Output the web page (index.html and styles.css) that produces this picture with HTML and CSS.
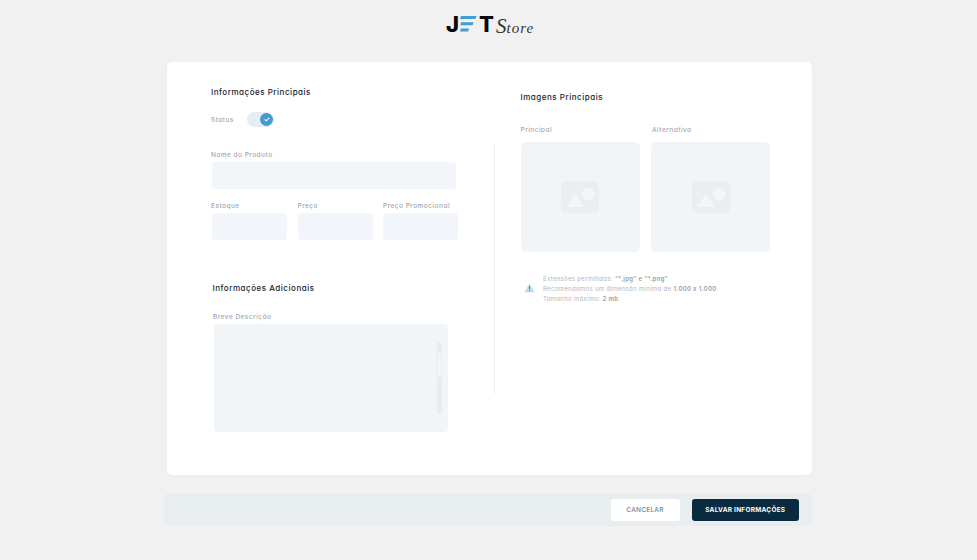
FILE: index.html
```html
<!DOCTYPE html>
<html lang="pt-BR">
<head>
<meta charset="utf-8">
<title>JET Store</title>
<link rel="stylesheet" href="styles.css">
</head>
<body>
<header class="brand">
  <span class="brand-j">J</span>
  <svg class="brand-e" width="17" height="17" viewBox="0 0 17 17" fill="#469dd0"><path d="M1 0H16.5L15.5 3H0ZM1 6.3H13.5L12.7 9.2H.4ZM1 12.6H9L8.2 15.6H0Z"/></svg>
  <span class="brand-t">T</span>
  <span class="brand-store"><span class="brand-s">S</span>tore</span>
</header>
<main class="card">
  <section class="details">
    <h2 class="title t-main">Informações Principais</h2>
    <div class="status"><span class="label">Status</span><span class="toggle"><span class="knob"><svg width="6" height="5" viewBox="0 0 6 5" fill="none" stroke="#fff" stroke-width="1.1"><path d="M.7 2.3L2.2 3.8L5.3.8"/></svg></span></span></div>
    <label class="label l-name">Nome do Produto</label>
    <div class="field name"></div>
    <div class="row">
      <div class="col"><label class="label">Estoque</label><div class="field"></div></div>
      <div class="col"><label class="label">Preço</label><div class="field"></div></div>
      <div class="col"><label class="label l-promo">Preço Promocional</label><div class="field"></div></div>
    </div>
    <h2 class="title t-extra">Informações Adicionais</h2>
    <label class="label l-desc">Breve Descrição</label>
    <div class="textarea"><div class="track"><div class="thumb"></div></div></div>
  </section>
  <div class="divider"></div>
  <section class="images">
    <h2 class="title t-img">Imagens Principais</h2>
    <div class="pictures">
      <div><div class="label l-pic">Principal</div>
        <div class="drop"><svg width="38" height="32" viewBox="0 0 38 32"><rect width="38" height="32" rx="5.5" fill="#e9eef1"/><path d="M5.5 26L14 12.5L22.5 26Z" fill="#f2f6f9"/><circle cx="27.3" cy="13" r="6.3" fill="#f2f6f9"/></svg></div></div>
      <div><div class="label l-pic l-alt">Alternativa</div>
        <div class="drop"><svg width="38" height="32" viewBox="0 0 38 32"><rect width="38" height="32" rx="5.5" fill="#e9eef1"/><path d="M5.5 26L14 12.5L22.5 26Z" fill="#f2f6f9"/><circle cx="27.3" cy="13" r="6.3" fill="#f2f6f9"/></svg></div></div>
    </div>
    <div class="note">
      <svg width="11" height="10" viewBox="0 0 11 10"><path d="M5.5.6L10.6 9.3H.4Z" fill="#b9deef"/><path d="M5.5 3V6.3M5.5 7.2V8.2" stroke="#4e8eaf" stroke-width="1.2"/></svg>
      <div class="lines">
        <div class="n1">Extensões permitidas: <b>“*.jpg” e “*.png”</b></div>
        <div class="n2">Recomendamos um dimensão mínima de <b>1.000 x 1.000</b></div>
        <div class="n3">Tamanho máximo: <b>2 mb</b>.</div>
      </div>
    </div>
  </section>
</main>
<footer class="actions">
  <button class="btn cancel">CANCELAR</button>
  <button class="btn save">SALVAR INFORMAÇÕES</button>
</footer>
</body>
</html>
```
FILE: styles.css
```css
* { box-sizing: border-box; }
body { margin: 0; height: 560px; background: #f1f1f1; overflow: hidden; font-family: Inter, "Liberation Sans", sans-serif; font-feature-settings: "cv11"; white-space: nowrap; }
.brand { height: 62px; padding: 16px 0 0 446px; display: flex; align-items: flex-start; }
.brand-j, .brand-t { font-weight: 800; font-size: 22px; line-height: 16px; color: #050708; }
.brand-j { width: 14px; }
.brand-t { width: 17px; margin-left: 2px; }
.brand-store { font: italic 15px/21px "Liberation Serif", serif; letter-spacing: 1px; color: #333; }
.brand-s { font-size: 21px; letter-spacing: 0; }
.card { margin-left: 167px; width: 645px; height: 413px; display: flex; background: #fff; border-radius: 5px; box-shadow: 0 1px 2px #e9ebec; }
.details { width: 327px; padding: 22.5px 0 0 44px; }
.title { margin: 0; font-size: 8px; line-height: 14px; font-weight: 500; color: #17232d; letter-spacing: .52px; }
.label { display: block; font-size: 6.5px; line-height: 10px; font-weight: 500; color: #a4a6ad; letter-spacing: .48px; }
.status { width: 63px; display: flex; align-items: center; height: 15px; margin-top: 13.5px; }
.toggle { width: 27px; height: 15px; margin-left: auto; border-radius: 8px; background: #e8edf4; padding: 1px; display: flex; justify-content: flex-end; }
.knob { width: 13px; height: 13px; border-radius: 50%; background: #439bd1; display: flex; align-items: center; justify-content: center; }
.l-name { margin-top: 23px; }
.field { height: 27px; border-radius: 4px; background: #f2f5f9; }
.name { width: 244px; margin: 2px 0 0 1px; }
.row { display: grid; grid-template-columns: 76px 75px 75px; column-gap: 10.5px; margin-top: 12px; }
.row .field { margin: 2px 0 0; }
.row .col:first-child .field { margin-left: 1px; }
.t-extra { margin: 41px 0 0 1.5px; }
.l-desc { margin: 17px 0 0 2px; }
.textarea { width: 234px; height: 107.5px; margin: 2px 0 0 3px; border-radius: 4px; background: #f2f5f8; padding: 18px 6px 18px 223px; }
.track { width: 5px; height: 71.5px; border-radius: 3px; background: #e8ecef; padding-top: 11px; }
.thumb { height: 24px; background: #f3f5f7; border: solid #e8ecef; border-width: 0 1px; }
.divider { width: 1px; height: 249px; margin-top: 83px; background: #eeeff0; }
.images { padding: 28px 0 0 25.5px; }
.pictures { display: grid; grid-template-columns: 119.5px 119px; column-gap: 11px; margin-top: 21px; }
.drop { height: 110px; margin-top: 7px; border-radius: 5px; background: #f2f5f8; display: flex; align-items: center; justify-content: center; }
.l-alt { padding-left: 1px; }
.note { display: flex; align-items: center; padding-left: 3px; margin-top: 22px; }
.note svg { position: relative; top: -1px; }
.lines { margin-left: 8.5px; font-size: 6px; line-height: 10px; color: #b4b6bc; letter-spacing: .33px; }
.lines b { font-weight: 600; color: #9a9ca5; }
.actions { width: 648px; height: 33px; margin: 18px 0 0 164px; padding: 6px 13.5px 0 0; border-radius: 5px; background: #e8edf0; display: flex; justify-content: flex-end; gap: 12.5px; }
.btn { border: 0; height: 22px; padding: 0; font: 500 6.5px/22px Inter, sans-serif; border-radius: 3px; letter-spacing: .25px; }
.cancel { width: 69px; background: #fff; color: #718491; }
.save { width: 106.5px; background: #092a3f; color: #fff; font-weight: 700; }
```
